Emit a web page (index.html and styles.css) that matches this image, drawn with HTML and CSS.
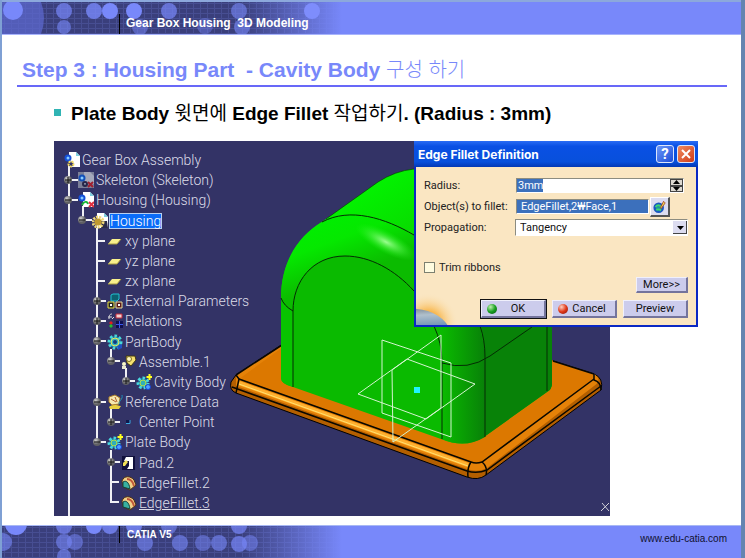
FILE: index.html
```html
<!DOCTYPE html>
<html lang="ko">
<head>
    <meta charset="UTF-8">
    <meta name="viewport" content="width=device-width, initial-scale=1.0">
    <title>Gear Box Housing 3D Modeling</title>
    <link rel="stylesheet" href="styles.css">
</head>
<body>
    <!-- shared symbols -->
    <svg class="defs" width="0" height="0" aria-hidden="true">
        <defs>
            <pattern id="weave" width="7" height="5" patternUnits="userSpaceOnUse">
                <rect width="7" height="5" fill="#3a3f7c"/>
                <path d="M0 1.5h7M2.500 0v5" stroke="#5a63b4" stroke-width="1" opacity=".4"/>
            </pattern>
            <linearGradient id="fade">
                <stop offset="0" stop-color="#7888fa" stop-opacity="0"/>
                <stop offset="1" stop-color="#7888fa"/>
            </linearGradient>
            <radialGradient id="ball" cx=".35" cy=".3">
                <stop offset="0" stop-color="#d0d0d0"/>
                <stop offset="1" stop-color="#606064"/>
            </radialGradient>
        </defs>
        <symbol id="doc" viewBox="0 0 16 16">
            <path d="M5 0h7l4 4v11H5z" fill="#fff"/>
            <path d="M12 0v4h4z" fill="#7fd0e0"/>
        </symbol>
        <symbol id="i-assembly" viewBox="0 0 16 16">
            <use href="#doc"/>
            <circle cx="4" cy="6" r="2.500" fill="#8cf" stroke="#1450d8" stroke-width="2"/>
            <circle cx="7" cy="12" r="2.500" fill="#333366" stroke="#f4dc60" stroke-width="2" stroke-dasharray="2 1"/>
        </symbol>
        <symbol id="i-skeleton" viewBox="0 0 16 16">
            <path d="M0 0h16v16H0z" fill="#7b7f98"/>
            <path d="M6 0h6l4 4v8H6z" fill="#a5a8ba"/>
            <circle cx="4" cy="6" r="2.500" fill="#8cf" stroke="#1450b8" stroke-width="2"/>
            <circle cx="7" cy="12" r="2" fill="none" stroke="#26264a" stroke-width="2"/>
            <path d="M10 10l5 5M15 10l-5 5" stroke="#a02030" stroke-width="2"/>
        </symbol>
        <symbol id="i-part" viewBox="0 0 16 16">
            <use href="#doc"/>
            <circle cx="4" cy="6" r="2.500" fill="#8cf" stroke="#1450d8" stroke-width="2"/>
            <path d="M4 13c2-4 5-4 6-1" fill="none" stroke="#18b838" stroke-width="2"/>
            <path d="M11 10l5 5M16 10l-5 5" stroke="#e03040" stroke-width="2"/>
        </symbol>
        <symbol id="i-housing" viewBox="0 0 16 16">
            <use href="#doc"/>
            <path d="M9 8h6l1 7H9z" fill="#2a2a4a"/>
            <circle cx="6" cy="9" r="5" fill="none" stroke="#f0d878" stroke-width="3" stroke-dasharray="2 1"/>
            <circle cx="6" cy="9" r="3.500" fill="#c09a30"/>
        </symbol>
        <symbol id="i-plane" viewBox="0 0 16 16">
            <path d="M5 6h9l-4 5H1z" fill="#f8f08c"/>
            <path d="M1 11h9l4-5" fill="none" stroke="#a89c40"/>
        </symbol>
        <symbol id="i-params" viewBox="0 0 16 16">
            <path d="M4 2l2-1h6v5l-2 2H4z" fill="#0d6070" stroke="#20c0d0"/>
            <path d="M1 9h6v6H1z" fill="#222" stroke="#e8e040"/>
            <path d="M9 9h6v6H9z" fill="#5a1818" stroke="#e8e0a0"/>
            <path d="M3 11h2v2H3zM11 11h2v2h-2z" fill="#fff"/>
        </symbol>
        <symbol id="i-relations" viewBox="0 0 16 16">
            <path d="M2 6c0-4 1-5 3-5M1 4h4M5 6l2-2" fill="none" stroke="#ddd"/>
            <path d="M9 1h6v4H9z" fill="#f4d0d0" stroke="#c02838"/>
            <path d="M4 8l2 2-2 2-2-2z" fill="#e02020"/>
            <path d="M4 11l2 2-2 2-2-2z" fill="#20c030"/>
            <path d="M9 8h7v7H9z" fill="#101050"/>
            <path d="M9 11.500h7M12.500 8v7" stroke="#3858f0"/>
        </symbol>
        <symbol id="i-gear" viewBox="0 0 16 16">
            <circle cx="8" cy="8" r="6" fill="#1878a8" stroke="#48d8d8" stroke-width="3" stroke-dasharray="2.500 2"/>
            <circle cx="8" cy="8" r="4" fill="#38b8c0" stroke="#e8e858"/>
            <circle cx="8" cy="8" r="2" fill="#143c80"/>
            <path d="M10 12l5-2v4l-4 2z" fill="#2050c0"/>
        </symbol>
        <symbol id="i-body" viewBox="0 0 16 16">
            <circle cx="7" cy="9" r="5" fill="#1878a8" stroke="#48d8e0" stroke-width="3" stroke-dasharray="2.500 2"/>
            <circle cx="7" cy="9" r="3" fill="#30b0b8" stroke="#b8e040"/>
            <circle cx="12" cy="13" r="2.500" fill="#50a0ff" stroke="#1440d0"/>
            <path d="M13.500 0v6M10.500 3h6" stroke="#ffff20" stroke-width="2"/>
        </symbol>
        <symbol id="i-update" viewBox="0 0 16 16">
            <circle cx="7" cy="9" r="5" fill="#2098a0" stroke="#1858c0" stroke-width="3"/>
            <path d="M3 8c2-3 5-3 7 0M4 12c2-2 4-1 6 0" fill="none" stroke="#40d870" stroke-width="2"/>
            <path d="M9 9l4-8 2 2-5 7z" fill="#f0e050" stroke="#a03828"/>
        </symbol>
        <symbol id="i-assemble" viewBox="0 0 16 16">
            <path d="M5 2h9l1 4-5 6-4-3z" fill="#f4e070" stroke="#403810"/>
            <circle cx="8" cy="5" r="2.500" fill="#fff8c0" stroke="#807020"/>
            <circle cx="3" cy="10" r="2" fill="#f8f8c8"/>
            <path d="M1 12h4v3H1z" fill="#e8e8d0"/>
        </symbol>
        <symbol id="i-refdata" viewBox="0 0 16 16">
            <path d="M2 13c3-3 7-2 12-1l-2 3H3z" fill="#e8d040"/>
            <path d="M2 3l6-2 5 3-1 6-7 1-3-3z" fill="#f4e8b0" stroke="#b08028"/>
            <path d="M4 5l5 3M8 3l2 5" stroke="#b06028"/>
            <path d="M12 10c0-4 4-4 3-9" fill="none" stroke="#2090b8"/>
        </symbol>
        <symbol id="i-point" viewBox="0 0 16 16">
            <path d="M5 6h4v4H5z" fill="#10184c"/>
            <path d="M5 9.500h4V6" fill="none" stroke="#38a8e0"/>
        </symbol>
        <symbol id="i-pad" viewBox="0 0 16 16">
            <path d="M1 1h13v14H1z" fill="#10103c"/>
            <path d="M5 2h7v12H6l2-3V6H3z" fill="#fff"/>
            <path d="M2 8l3-3 2 2-3 4H2z" fill="#f0e058"/>
        </symbol>
        <symbol id="i-fillet" viewBox="0 0 16 16">
            <path d="M1 6c2-6 9-5 12-1l2 5-6 5-7-3z" fill="#f0d088" stroke="#503010"/>
            <path d="M6 4c4 0 6 3 7 7" fill="none" stroke="#c05838" stroke-width="2"/>
            <path d="M2 7c3-2 6 0 7 7l-7-2z" fill="#38b0a0" stroke="#104040"/>
        </symbol>
    </svg>

    <header class="banner">
        <svg class="motif" width="340" height="32" aria-hidden="true">
            <rect width="340" height="32" fill="url(#weave)"/>
            <circle cx="-2" cy="16" r="44" fill="#5c68cc" opacity=".75"/>
            <g fill="#7888fa">
                <circle cx="11" cy="8" r="10"/>
                <circle cx="62" cy="9" r="8" opacity=".7"/>
                <circle cx="62" cy="25" r="7" opacity=".6"/>
                <circle cx="92" cy="9" r="8" opacity=".8"/>
                <circle cx="108" cy="9" r="8"/>
                <circle cx="132" cy="9" r="8"/>
                <circle cx="138" cy="25" r="8" opacity=".5"/>
                <circle cx="167" cy="9" r="8" opacity=".7"/>
                <circle cx="203" cy="24" r="8" opacity=".4"/>
                <circle cx="237" cy="9" r="8" opacity=".6"/>
                <circle cx="240" cy="25" r="8" opacity=".6"/>
            </g>
            <rect x="240" width="100" height="32" fill="url(#fade)"/>
            <circle cx="310" cy="9" r="8" fill="#7e8dfc"/>
        </svg>
        <span class="banner-text">Gear Box Housing&nbsp; 3D Modeling</span>
    </header>

    <main>
        <h1>Step 3 : Housing Part&nbsp; - Cavity Body <span class="ko">구성 하기</span></h1>
        <h2>Plate Body <span class="ko">윗면에</span> Edge Fillet <span class="ko">작업하기</span>. (Radius : 3mm)</h2>

        <section class="viewport">
            <svg class="scene" viewBox="54 141 556 375" preserveAspectRatio="xMinYMin slice" role="img" aria-label="Housing model">
                <defs>
                    <linearGradient id="corner" gradientUnits="userSpaceOnUse" x1="442" y1="0" x2="484" y2="0">
                        <stop offset="0" stop-color="#0aba00"/>
                        <stop offset="1" stop-color="#088208"/>
                    </linearGradient>
                    <linearGradient id="dome" gradientUnits="userSpaceOnUse" x1="330" y1="215" x2="352" y2="275">
                        <stop offset="0" stop-color="#00ee00"/>
                        <stop offset=".4" stop-color="#05e800"/>
                        <stop offset="1" stop-color="#0bbb00"/>
                    </linearGradient>
                    <linearGradient id="roof" gradientUnits="userSpaceOnUse" x1="370" y1="180" x2="405" y2="235">
                        <stop offset="0" stop-color="#02f400"/>
                        <stop offset="1" stop-color="#08dc00"/>
                    </linearGradient>
                    <radialGradient id="shine">
                        <stop offset="0" stop-color="#9cff90"/>
                        <stop offset="1" stop-color="#20f018" stop-opacity="0"/>
                    </radialGradient>
                </defs>

                <!-- plate -->
                <path d="M236 375L330 313H500L553 361 594 374Q604 378 601 390L486 475Q478 481 467 477L236 393Q229 390 231 382Z" fill="#b45f00" stroke="#000" stroke-width="1"/>
                <path d="M236 375L330 313H500L553 361 594 374Q603 380 594 386L487 468Q478 473 467 469L236 386Z" fill="#e58208"/>
                <path d="M239 379L330 313H500L553 361 594 375 594 379 480 463Q475 463 471 462Z" fill="#dc7800"/>
                <path d="M239 383L468 465" stroke="#ffb030" stroke-width="4"/>
                <path d="M239 384L468 466" stroke="#ffe070" stroke-width="1"/>
                <g fill="none" stroke="#0a0800" stroke-width="1.500">
                    <path d="M236 375L282 345M553 361L594 374M239 379L471 462Q476 464 482 462L594 379M232 387L467 471Q477 474 487 470L601 386"/>
                    <path d="M236 375L239 379 236 393M471 462Q467 468 468 477M482 462Q488 467 486 475M594 374V380Q601 382 601 390"/>
                </g>

                <!-- housing -->
                <path d="M281 378V298C281 262 298 236 326 219L378 182Q395 171 414 169H500L552 210V384Q552 389 547 392L484 437Q465 449 441 439L293 387Q281 384 281 378Z" fill="#0aba00"/>
                <path d="M326 219L378 182Q395 171 414 169H480V260L414 235C385 218 350 207 322 222Z" fill="url(#roof)"/>
                <path d="M281 298C281 262 298 236 322 222C350 207 385 218 414 235L470 300 440 340 413 290C395 270 370 256 345 256C312 256 293 282 293 311Q283 306 281 298Z" fill="url(#dome)"/>
                <ellipse cx="386" cy="242" rx="34" ry="11" transform="rotate(28 386 242)" fill="url(#shine)"/>
                <path d="M281 298Q284 306 293 311V387Q281 384 281 378Z" fill="#08c400"/>
                <path d="M434 320Q442 338 442 363V439Q465 449 485 437V357Q483 335 478 320Z" fill="url(#corner)"/>
                <path d="M478 320Q484 335 484 357V437L547 392Q552 389 552 384V320Z" fill="#088208"/>
                <g fill="none" stroke="#042c04" stroke-width="1">
                    <path d="M326 219L378 182Q395 171 414 169" opacity=".6"/>
                    <path d="M322 222C350 207 385 218 414 235"/>
                    <path d="M293 387V311C293 282 312 256 345 256C370 256 395 270 414 291"/>
                    <path d="M281 298Q284 306 293 311M434 326Q442 343 442 363V439"/>
                    <path d="M480 326Q485 340 485 357V437M442 363Q468 371 490 356L532 327M547 326V391"/>
                </g>

                <!-- reference planes -->
                <g fill="none" stroke="#d4f4d0" stroke-width="1">
                    <path d="M382 340L451 363V437L382 413Z"/>
                    <path d="M358 394L407 359 475 384 426 419Z"/>
                    <path d="M392 370L441 335V408L393 442Z"/>
                </g>
                <path d="M414 387h6v6h-6z" fill="#20f4ff"/>
                <path d="M602 503l7 8M609 503l-8 8" stroke="#d0d0d8" stroke-width="1"/>
            </svg>

            <div class="tree">
                <svg class="guides" width="100" height="375" viewBox="54 141 100 375" aria-hidden="true">
                    <path d="M69 166V516M69 180h9M69 200h9M83 206V220h9M97 228V442M97 241h8M97 261h8M97 281h8M97 301h9M97 321h9M97 341h9M97 402h9M97 442h9M111 349V361h9M126 368V381h9M111 409V422h9M111 450V502h8M111 462h9M111 482h8" fill="none" stroke="#f0f0f4" stroke-width="2"/>
                    <g fill="url(#ball)">
                        <circle cx="68" cy="180" r="4"/><circle cx="68" cy="200" r="4"/><circle cx="82" cy="220" r="4"/>
                        <circle cx="97" cy="301" r="4"/><circle cx="97" cy="321" r="4"/><circle cx="97" cy="341" r="4"/>
                        <circle cx="111" cy="361" r="4"/><circle cx="126" cy="381" r="4"/><circle cx="97" cy="402" r="4"/>
                        <circle cx="111" cy="422" r="4"/><circle cx="97" cy="442" r="4"/><circle cx="111" cy="462" r="4"/>
                    </g>
                    <path d="M65 180h6M68 177v6M65 200h6M79 220h6M94 301h6M97 298v6M94 321h6M97 318v6M94 341h6M108 361h6M123 381h6M126 378v6M94 402h6M108 422h6M111 419v6M94 442h6M108 462h6M111 459v6" stroke="#111"/>
                </svg>
                <ul>
                    <li class="l0"><svg><use href="#i-assembly"/></svg><span>Gear Box Assembly</span></li>
                    <li class="l1"><svg><use href="#i-skeleton"/></svg><span>Skeleton (Skeleton)</span></li>
                    <li class="l1"><svg><use href="#i-part"/></svg><span>Housing (Housing)</span></li>
                    <li class="l2"><svg><use href="#i-housing"/></svg><span class="selected">Housing</span></li>
                    <li class="l3"><svg><use href="#i-plane"/></svg><span>xy plane</span></li>
                    <li class="l3"><svg><use href="#i-plane"/></svg><span>yz plane</span></li>
                    <li class="l3"><svg><use href="#i-plane"/></svg><span>zx plane</span></li>
                    <li class="l3"><svg><use href="#i-params"/></svg><span>External Parameters</span></li>
                    <li class="l3"><svg><use href="#i-relations"/></svg><span>Relations</span></li>
                    <li class="l3"><svg><use href="#i-gear"/></svg><span>PartBody</span></li>
                    <li class="l4"><svg><use href="#i-assemble"/></svg><span>Assemble.1</span></li>
                    <li class="l5"><svg><use href="#i-body"/></svg><span>Cavity Body</span></li>
                    <li class="l3"><svg><use href="#i-refdata"/></svg><span>Reference Data</span></li>
                    <li class="l4"><svg><use href="#i-point"/></svg><span>Center Point</span></li>
                    <li class="l3"><svg><use href="#i-body"/></svg><span>Plate Body</span></li>
                    <li class="l4"><svg><use href="#i-pad"/></svg><span>Pad.2</span></li>
                    <li class="l4"><svg><use href="#i-fillet"/></svg><span>EdgeFillet.2</span></li>
                    <li class="l4"><svg><use href="#i-fillet"/></svg><span class="current">EdgeFillet.3</span></li>
                </ul>
            </div>

            <form class="dialog" onsubmit="return false">
                <div class="titlebar">
                    <span>Edge Fillet Definition</span>
                    <button type="button" class="tb help" aria-label="Help">?</button>
                    <button type="button" class="tb close" aria-label="Close"><svg width="10" height="10"><path d="M1 1l8 8M9 1l-8 8" stroke="#fff" stroke-width="2"/></svg></button>
                </div>
                <div class="dialog-body">
                    <svg class="planet" width="42" height="34" aria-hidden="true">
                        <defs>
                            <radialGradient id="glow"><stop offset=".4" stop-color="#f8b850"/><stop offset="1" stop-color="#fae6c0" stop-opacity="0"/></radialGradient>
                            <linearGradient id="globe" x2=".6" y2="1"><stop offset="0" stop-color="#505860"/><stop offset=".3" stop-color="#b0c0cc"/><stop offset=".7" stop-color="#4878a8"/><stop offset="1" stop-color="#283848"/></linearGradient>
                        </defs>
                        <circle cx="12" cy="32" r="30" fill="url(#glow)"/>
                        <ellipse cx="6" cy="38" rx="29" ry="19" fill="url(#globe)" transform="rotate(18 6 38)"/>
                    </svg>
                    <div class="fields">
                        <label for="radius">Radius:</label>
                        <div class="spin">
                            <input type="text" id="radius" value="3mm">
                            <div class="arrows">
                                <button type="button" aria-label="Increase"><svg width="9" height="4"><path d="M1 4h7L4.500 0z"/></svg></button>
                                <button type="button" aria-label="Decrease"><svg width="9" height="4"><path d="M1 0h7L4.500 4z"/></svg></button>
                            </div>
                        </div>
                        <label for="objects">Object(s) to fillet:</label>
                        <div class="pick">
                            <input type="text" id="objects" value="EdgeFillet,2₩Face,1">
                            <button type="button" aria-label="Edit objects"><svg width="14" height="14"><use href="#i-update"/></svg></button>
                        </div>
                        <label for="propagation">Propagation:</label>
                        <div class="combo">
                            <select id="propagation"><option>Tangency</option></select>
                            <svg class="drop" width="14" height="13"><path d="M4 5h7L7.500 9z"/></svg>
                        </div>
                    </div>
                    <div class="check">
                        <input type="checkbox" id="trim"><label for="trim">Trim ribbons</label>
                    </div>
                    <div class="more"><button type="button" class="btn">More&gt;&gt;</button></div>
                    <div class="actions">
                        <button type="submit" class="btn ok"><i class="led green"></i><span>OK</span></button>
                        <button type="button" class="btn"><i class="led red"></i><span>Cancel</span></button>
                        <button type="button" class="btn">Preview</button>
                    </div>
                </div>
            </form>
        </section>
    </main>

    <footer class="banner">
        <svg class="motif" width="340" height="32" aria-hidden="true">
            <rect width="340" height="32" fill="url(#weave)"/>
            <g fill="#7888fa">
                <circle cx="14" cy="-2" r="11"/>
                <circle cx="1" cy="16" r="9" opacity=".6"/>
                <circle cx="62" cy="0" r="8" opacity=".7"/>
                <circle cx="62" cy="16" r="8" opacity=".6"/>
                <circle cx="73" cy="16" r="8" opacity=".5"/>
                <circle cx="62" cy="30" r="7" opacity=".6"/>
                <circle cx="92" cy="0" r="8"/>
                <circle cx="108" cy="0" r="8" opacity=".8"/>
                <circle cx="132" cy="0" r="8" opacity=".8"/>
                <circle cx="143" cy="17" r="8" opacity=".6"/>
                <circle cx="167" cy="0" r="8" opacity=".6"/>
                <circle cx="178" cy="17" r="8" opacity=".6"/>
                <circle cx="201" cy="17" r="8" opacity=".5"/>
                <circle cx="217" cy="17" r="8" opacity=".6"/>
                <circle cx="237" cy="0" r="8" opacity=".7"/>
                <circle cx="237" cy="18" r="8" opacity=".7"/>
                <circle cx="248" cy="17" r="8" opacity=".5"/>
            </g>
            <rect x="240" width="100" height="32" fill="url(#fade)"/>
        </svg>
        <span class="banner-text">CATIA V5</span>
        <a href="#">www.edu-catia.com</a>
    </footer>
</body>
</html>
```
FILE: styles.css
```css
* { box-sizing: border-box; }
body { margin: 0; min-height: 100vh; display: flex; flex-direction: column; background: #fff; font-family: "Liberation Sans", "Noto Sans CJK KR", sans-serif; border-left: 2px solid #7fa0d4; border-right: 4px solid #6484b0; }
button, input, select { font: inherit; margin: 0; }
.defs { position: absolute; }

/* top and bottom bars */
.banner { position: relative; display: flex; background: #7888fa; color: #fff; font-weight: bold; }
.motif { position: absolute; left: 0; top: 0; }
.banner-text { position: relative; border-left: 1px solid #000; }
header.banner { height: 35px; border-top: 2px solid #8ca8dc; border-bottom: 1px solid #a8b4fc; padding-left: 117px; }
header .banner-text { margin-top: 12px; padding-left: 6px; font-size: 12px; line-height: 18px; }
footer.banner { height: 33px; border-top: 1px solid #a8b8f4; padding: 0 14px 0 117px; justify-content: space-between; }
footer .banner-text { height: 17px; padding-left: 7px; font-size: 10px; line-height: 17px; }
footer a { margin-top: 4px; color: #101030; font-size: 10px; font-weight: normal; line-height: 17px; text-decoration: none; }

main { flex: 1; display: flex; flex-direction: column; padding: 17px 14px 9px 15px; }
h1 { margin: 0; padding: 0 5px 0; height: 35px; border-bottom: 2px solid #6868f8; color: #7888fa; font-size: 21px; line-height: 36px; white-space: nowrap; }
h2 { margin: 12px 0; padding-left: 54px; position: relative; font-size: 19px; line-height: 30px; white-space: nowrap; }
h2::before { content: ""; position: absolute; left: 37px; top: 10px; width: 7px; height: 7px; background: #30b4b4; }
.ko { font-family: "Noto Sans CJK KR", sans-serif; font-weight: 300; font-size: 20px; line-height: 20px; }
h2 .ko { font-size: 19px; font-weight: 400; }

/* 3D window */
.viewport { position: relative; flex: 1; min-height: 375px; margin: 0 117px 0 37px; background: #333366; }
.scene { position: absolute; width: 100%; height: 100%; display: block; }
.tree { position: relative; padding-top: 9px; }
.guides { position: absolute; left: 0; top: 0; }
.tree ul { position: relative; list-style: none; margin: 0; padding: 0; display: grid; grid-auto-rows: 1fr; height: 363px; }
.tree li { display: flex; align-items: center; gap: 2px; color: #dcdce8; font-family: Roboto, sans-serif; font-size: 14px; font-weight: 300; line-height: 16px; }
.tree li svg { width: 16px; height: 16px; }
.l0 { padding-left: 10px; }
.l1 { padding-left: 24px; }
.l2 { padding-left: 38px; }
.l3 { padding-left: 53px; }
.l4 { padding-left: 67px; }
.l5 { padding-left: 82px; }
.selected { background: #0a6cf8; color: #fff; box-shadow: 0 0 0 1px #b8d0f0; line-height: 14px; }
.current { text-decoration: underline; }

/* dialog */
.dialog { position: absolute; right: -88px; top: 0; width: 284px; border: 2px solid #0a28c4; border-top: 0; background: #fae6c2; font-family: Roboto, "Noto Sans CJK KR", sans-serif; font-size: 11px; color: #222; }
.titlebar { display: flex; align-items: center; gap: 3px; height: 26px; margin: 0 -2px; padding: 0 3px 0 4px; background: linear-gradient(#2a6cf4, #0a50e4 20%, #0850dc 80%, #0438b4); color: #fff; font-size: 12px; font-weight: bold; }
.titlebar span { flex: 1; font-family: Inter, sans-serif; }
.tb { width: 18px; height: 18px; padding: 0; display: flex; align-items: center; justify-content: center; border: 1px solid #dce6fc; border-radius: 3px; color: #fff; font-size: 15px; font-weight: bold; line-height: 15px; }
.help { background: linear-gradient(135deg, #6c98f8, #1c4cd8); }
.close { background: linear-gradient(135deg, #f08c60, #d03c18); }
.dialog-body { position: relative; padding: 8px 8px 7px; }
.planet { position: absolute; left: 0; bottom: 0; }
.fields { position: relative; display: grid; grid-template-columns: 92px 1fr; grid-auto-rows: 21px; align-items: center; }
.spin { display: flex; height: 15px; margin-right: 4px; border: 1px solid #8c8c80; border-right-color: #fff; border-bottom-color: #fff; background: #fff; }
.spin input { flex: 1; min-width: 0; padding: 0 1px; border: 0; background: linear-gradient(#3c70bc, #3c70bc) no-repeat 0 0 / 26px 100%; color: #fff; line-height: 13px; }
.arrows { width: 13px; display: flex; flex-direction: column; }
.arrows button { flex: 1; padding: 0; border: 1px solid #444; background: #dcd8d0; display: flex; align-items: center; justify-content: center; overflow: hidden; }
.pick { display: flex; align-items: center; gap: 1px; }
.pick input { width: 133px; height: 15px; padding: 0 4px; border: 1px solid #8c8c80; border-right-color: #fff; border-bottom-color: #fff; background: #3c70bc; color: #fff; line-height: 13px; }
.pick button { width: 20px; height: 20px; padding: 2px; border: 1px solid #fff; border-right: 2px solid #555; border-bottom: 2px solid #555; background: #dcdcf0; display: flex; }
.combo { position: relative; height: 17px; margin-left: -1px; }
.combo select { appearance: none; width: 100%; height: 17px; padding: 0 4px; border: 1px solid #8c8c80; border-right-color: #fff; border-bottom-color: #fff; border-radius: 0; background: #fff; color: #111; line-height: 15px; }
.drop { position: absolute; right: 1px; top: 2px; background: #dcdcf0; border-right: 1px solid #444; border-bottom: 1px solid #444; }
.check { display: flex; align-items: center; gap: 4px; margin-top: 19px; height: 20px; }
.check input { appearance: none; width: 11px; height: 11px; border: 1px solid #7c8070; background: #fffce0; }
.more { display: flex; justify-content: flex-end; }
.btn { position: relative; height: 18px; padding: 0 5px; border: 1px solid #f0f0fc; border-right: 2px solid #74749c; border-bottom: 2px solid #74749c; background: #ccccec; color: #111; line-height: 14px; display: flex; align-items: center; justify-content: center; }
.more .btn { height: 16px; width: 52px; }
.actions { display: flex; justify-content: flex-end; gap: 6px; margin-top: 7px; }
.actions .btn { width: 65px; }
.actions .btn span { flex: 1; text-align: center; }
.actions .ok { outline: 1px solid #111; }
.led { width: 10px; height: 10px; border-radius: 5px; }
.green { background: radial-gradient(circle at 35% 30%, #c0f0b0, #18a020 50%, #085010); }
.red { background: radial-gradient(circle at 35% 30%, #ffd0c0, #e03818 50%, #801008); }
```
